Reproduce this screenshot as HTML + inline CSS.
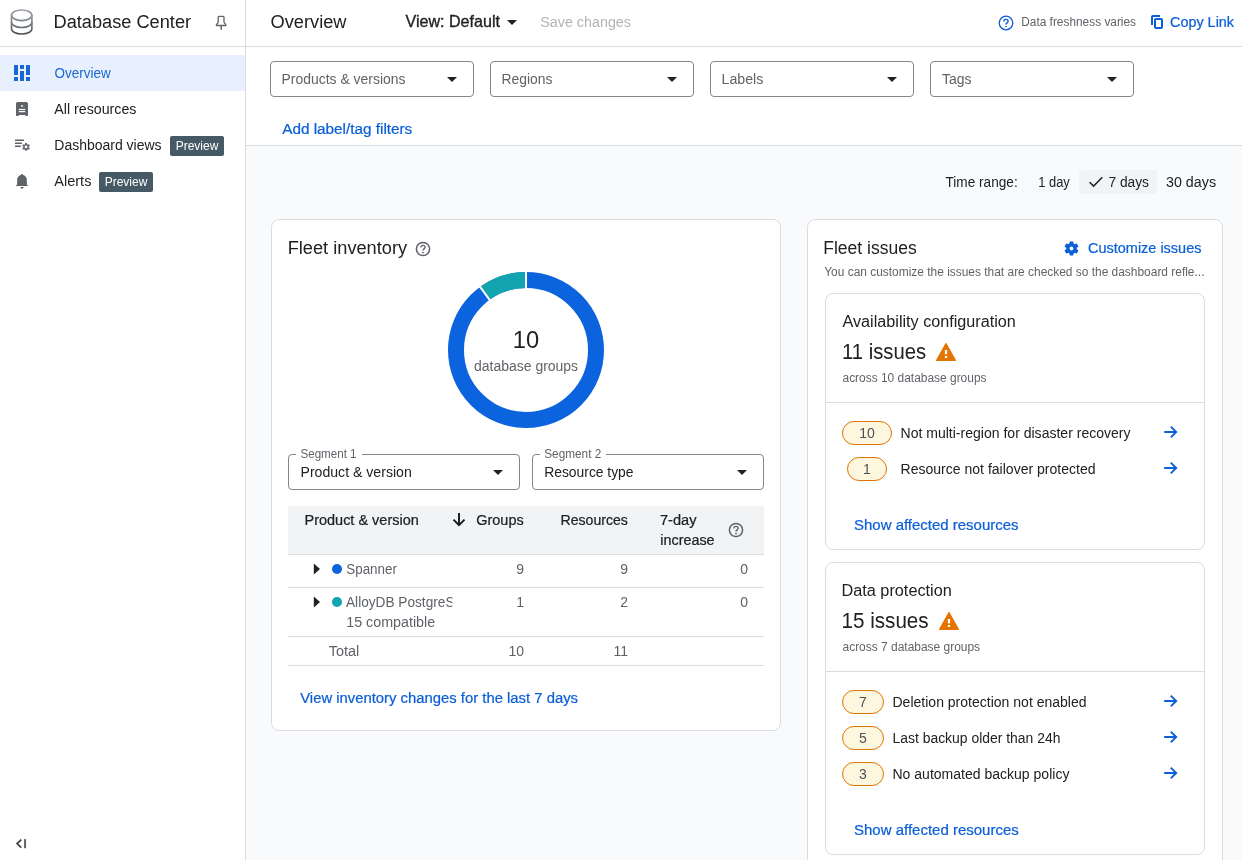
<!DOCTYPE html>
<html lang="en">
<head>
<meta charset="utf-8">
<title>Database Center</title>
<style>
*{box-sizing:border-box;margin:0;padding:0}
html,body{width:1242px;height:860px;overflow:hidden;background:#f8fafc;font-family:"Liberation Sans",sans-serif;color:#202124;-webkit-font-smoothing:antialiased}
.abs{position:absolute}
.t{position:absolute;white-space:nowrap;line-height:1}
#side{position:absolute;left:0;top:0;width:246px;height:860px;background:#fff;border-right:1px solid #dadce0}
#top{position:absolute;left:246px;top:0;width:996px;height:47px;background:#fff;border-bottom:1px solid #dadce0}
#sidehead{position:absolute;left:0;top:0;width:245px;height:47px;border-bottom:1px solid #dadce0}
#filters{position:absolute;left:246px;top:47px;width:996px;height:99px;background:#fff;border-bottom:1px solid #dadce0}
.nav-active{position:absolute;left:0;top:55px;width:245px;height:36px;background:#e8f0fe}
.dd{position:absolute;top:61px;width:204px;height:36px;border:1px solid #80868b;border-radius:4px;background:#fff}
.dd .t{left:11px;top:10px;font-size:14px;color:#5f6368}
.caret{position:absolute;width:0;height:0;border-left:5px solid transparent;border-right:5px solid transparent;border-top:5px solid #202124}
.badge{position:absolute;width:54px;text-align:center;height:20px;background:#455a64;border-radius:2px;color:#fff;font-size:12px;line-height:20px;padding:0;white-space:nowrap}
.card{position:absolute;background:#fff;border:1px solid #dadce0;border-radius:8px}
.blue{color:#0b5fd9}
.gray{color:#5f6368}
.pill{position:absolute;height:24px;border:1.5px solid #e37400;background:#fef7e0;border-radius:12px;font-size:14px;line-height:23px;text-align:center;color:#4d5156}

.hl{left:288px;width:476px;height:1px;background:#dadce0}
.th{font-size:14px;color:#202124;-webkit-text-stroke:0.22px #202124}
.td{font-size:14px}
.r{text-align:right}
.lk{font-size:14px;-webkit-text-stroke:0.22px #0b5fd9}
.it{font-size:14px;color:#202124}
.t{transform-origin:0 0}
/*AUTO*/
#t_dbc{transform:translate(-0.5px,0px) scaleX(1.0111)}
#t_nav1{transform:translate(0.6px,0px) scaleX(0.961)}
#t_nav2{transform:translate(0.3px,0px) scaleX(1.0148)}
#t_nav3{transform:translate(0.3px,0px) scaleX(0.9991)}
#t_nav4{transform:translate(0.3px,0px) scaleX(1.0361)}
#t_title{transform:translate(0.5px,0px) scaleX(1.0132)}
#t_view{transform:translate(1.5px,0px) scaleX(1.0052)}
#t_save{transform:translate(0.25px,0px) scaleX(1.0227)}
#t_fresh{transform:translate(0.2px,0px) scaleX(0.9897)}
#t_copy{transform:translate(0px,0px) scaleX(1.0286)}
#t_dd1{transform:translate(-0.5px,0px) scaleX(0.996)}
#t_dd2{transform:translate(-0.5px,0px) scaleX(0.99)}
#t_dd3{transform:translate(-0.5px,0px) scaleX(1.0125)}
#t_dd4{transform:translate(0px,0px) scaleX(1)}
#t_addf{transform:translate(0.2px,0px) scaleX(1.0924)}
#t_tr{transform:translate(0.5px,0px) scaleX(0.973)}
#t_1d{transform:translate(0.25px,0px) scaleX(0.9214)}
#t_7d{transform:translate(0.5px,0px) scaleX(0.9817)}
#t_30d{transform:translate(0px,0px) scaleX(1.0204)}
#t_fi{transform:translate(-0.3px,0px) scaleX(1.0111)}
#t_ten{transform:translate(-0.2px,0px) scaleX(1.0292)}
#t_dbg{transform:translate(0px,0px) scaleX(0.9981)}
#t_s1{transform:translate(0.5px,0px) scaleX(0.965)}
#t_s1v{transform:translate(0.5px,0px) scaleX(1.0068)}
#t_s2{transform:translate(0.25px,0px) scaleX(0.9828)}
#t_s2v{transform:translate(0.25px,0px) scaleX(0.9889)}
#t_h1{transform:translate(0.5px,0px) scaleX(1.0341)}
#t_h2{transform:translate(0.25px,0px) scaleX(1.0326)}
#t_h3{transform:translate(0.5px,0px) scaleX(1.0075)}
#t_h4{transform:translate(0px,0px) scaleX(1.0417)}
#t_h5{transform:translate(0.3px,0px) scaleX(1.0264)}
#t_r1{transform:translate(0.25px,0px) scaleX(0.9575)}
#t_r2x{transform:translate(0.25px,0px) scaleX(1.0201)}
#t_r3{transform:translate(0.75px,0px) scaleX(1.0345)}
#t_vic{transform:translate(0.2px,0px) scaleX(1.0603)}
#t_fis{transform:translate(-0.75px,0px) scaleX(0.9737)}
#t_cust{transform:translate(0px,0px) scaleX(1.0341)}
#t_you{transform:translate(0.25px,0px) scaleX(0.9941)}
#t_av{transform:translate(0.5px,0px) scaleX(1.0117)}
#t_11i{transform:translate(0px,0px) scaleX(0.9)}
#t_ac10{transform:translate(0.5px,0px) scaleX(0.9948)}
#t_i1{transform:translate(0.5px,0px) scaleX(1.0022)}
#t_i2{transform:translate(0.5px,0px) scaleX(1.0026)}
#t_sar1{transform:translate(0px,0px) scaleX(1.0698)}
#t_dp{transform:translate(-0.5px,0px) scaleX(1.0164)}
#t_15i{transform:translate(-0.5px,0px) scaleX(0.917)}
#t_ac7{transform:translate(0.5px,0px) scaleX(0.9964)}
#t_i3{transform:translate(0.5px,0px) scaleX(1.0013)}
#t_i4{transform:translate(0.5px,0px) scaleX(0.9941)}
#t_i5{transform:translate(0.5px,0px) scaleX(1.0014)}
#t_sar2{transform:translate(0px,0px) scaleX(1.0708)}
/*ENDAUTO*/
</style>
</head>
<body><div id="app" style="position:absolute;left:0;top:0;width:1242px;height:860px;will-change:transform">
<!-- SIDEBAR -->
<div id="side">
  <div id="sidehead"></div>
  <div class="nav-active"></div>
</div>
<div id="top"></div>
<div id="filters"></div>

<!-- sidebar header -->
<svg class="abs" style="left:9px;top:8px" width="26" height="28" viewBox="0 0 26 28" fill="none" stroke="url(#dbg)" stroke-width="1.600">
  <defs><linearGradient id="dbg" gradientUnits="userSpaceOnUse" x1="0" y1="0" x2="0" y2="28"><stop offset="0" stop-color="#9aa0a6"/><stop offset=".45" stop-color="#80868b"/><stop offset="1" stop-color="#45494d"/></linearGradient></defs>
  <ellipse cx="12.700" cy="7.300" rx="10.200" ry="5.300"/>
  <path d="M2.500 7.300v13.400c0 2.930 4.570 5.300 10.200 5.300s10.200-2.370 10.200-5.300V7.300"/>
  <path d="M2.500 14.200c0 2.930 4.570 5.300 10.200 5.300s10.200-2.370 10.200-5.300"/>
</svg>
<div class="t" id="t_dbc" style="left:54px;top:13px;font-size:18px;color:#202124">Database Center</div>
<svg class="abs" style="left:213px;top:14px" width="16" height="18" viewBox="0 0 16 18" fill="none" stroke="#5f6368" stroke-width="1.3">
  <path stroke-linejoin="round" d="M5.200 8.400V3.300c0-.6.400-1 1-1h3.800c.6 0 1 .4 1 1v5.100l1.800 2.300v.8H3.400v-.8z"/><path stroke-width="1.500" d="M8.200 11.500v4.200"/>
</svg>

<!-- nav -->
<svg class="abs" style="left:14px;top:65px" width="16" height="16" viewBox="0 0 16 16" fill="#1967d2">
  <rect x="0" y="0" width="4" height="10"/><rect x="0" y="12" width="4" height="4"/>
  <rect x="6" y="0" width="4" height="4"/><rect x="6" y="6" width="4" height="10"/>
  <rect x="12" y="0" width="4" height="10"/><rect x="12" y="12" width="4" height="4"/>
</svg>
<div class="t" id="t_nav1" style="left:54px;top:66px;font-size:14px;color:#1967d2">Overview</div>

<svg class="abs" style="left:16px;top:102px" width="12" height="14" viewBox="0 0 12 14">
  <path fill="#5f6368" d="M1.800 0h8.400c1 0 1.800.8 1.800 1.800v11.100c0 .6-.5 1.100-1.100 1.100h-.7c-.6 0-1.100-.5-1.100-1.100H2.900c0 .6-.5 1.100-1.100 1.100h-.7C.5 14 0 13.500 0 12.900V1.800C0 .8.800 0 1.800 0z"/>
  <rect x="5" y="3.100" width="2.100" height="1.800" fill="#d5d7d9"/>
  <rect x="2.800" y="6.900" width="6.400" height="1.200" fill="#fff"/>
  <rect x="2.800" y="9" width="6.400" height="1.200" fill="#fff"/>
</svg>
<div class="t" id="t_nav2" style="left:54px;top:102px;font-size:14px">All resources</div>

<svg class="abs" style="left:15px;top:139px" width="16" height="13" viewBox="0 0 16 13" fill="none" stroke="#5f6368">
  <path stroke="none" fill="#5f6368" d="M0 .4h9v1.500H0zM0 3.400h6.900v1.500H0zM0 6.450h5.900v1.500H0z"/>
  <circle cx="11.05" cy="7.95" r="2.150" stroke-width="1.500"/>
  <path stroke-width="1.900" d="M11.05 5.45L11.05 4.05M13.22 6.70L14.43 6.00M13.22 9.20L14.43 9.90M11.05 10.45L11.05 11.85M8.88 9.20L7.67 9.90M8.88 6.70L7.67 6.00"/>
</svg>
<div class="t" id="t_nav3" style="left:54px;top:138px;font-size:14px">Dashboard views</div>
<div class="badge" id="b1" style="left:170px;top:136px">Preview</div>

<svg class="abs" style="left:16px;top:174px" width="12" height="15" viewBox="0 0 12 15" fill="#5f6368">
  <path d="M5 .9C5 .4 5.450 0 6 0s1 .4 1 .9v.150c2.200.5 3.850 2.400 3.850 4.750v4.600l1.150 1.200v.3H0v-.3l1.150-1.200V5.800c0-2.350 1.650-4.250 3.850-4.750z"/>
  <path d="M4.400 13h3.200c0 .950-.7 1.700-1.600 1.700s-1.600-.750-1.600-1.700z"/>
</svg>
<div class="t" id="t_nav4" style="left:54px;top:174px;font-size:14px">Alerts</div>
<div class="badge" id="b2" style="left:99px;top:172px">Preview</div>

<svg class="abs" style="left:15px;top:838px" width="13" height="12" viewBox="0 0 13 12" fill="none" stroke="#3c4043">
  <path stroke-width="1.700" d="M6.300 1.600L2.100 5.600l4.200 4"/><path stroke-width="2" stroke="#5f6368" d="M10.050 1.100v9.100"/>
</svg>

<!-- top bar -->
<div class="t" id="t_title" style="left:270px;top:13px;font-size:18px">Overview</div>
<div class="t" id="t_view" style="left:404px;top:14px;font-size:16px;color:#202124;-webkit-text-stroke:0.32px #202124">View: Default</div>
<div class="caret" style="left:507px;top:20px"></div>
<div class="t" id="t_save" style="left:540px;top:15px;font-size:14px;color:#b0b3b8">Save changes</div>
<svg class="abs" style="left:998px;top:15px" width="16" height="16" viewBox="0 0 16 16" fill="none" stroke="#0b5fd9" stroke-width="1.300">
  <circle cx="8" cy="8" r="6.800"/>
  <path d="M5.900 6.400c0-1.200.9-2 2.100-2s2.100.8 2.100 1.900c0 1.500-2.100 1.700-2.100 3.300" stroke-width="1.400"/>
  <circle cx="8" cy="11.500" r=".5" fill="#0b5fd9" stroke-width=".8"/>
</svg>
<div class="t gray" id="t_fresh" style="left:1021px;top:16px;font-size:12px">Data freshness varies</div>
<svg class="abs" style="left:1150px;top:14px" width="14" height="16" viewBox="0 0 14 16" fill="none" stroke="#0b5fd9" stroke-width="2">
  <path d="M2 10.900V3c0-.55.450-1 1-1h7"/>
  <rect x="5" y="5" width="7" height="9" rx="1"/>
</svg>
<div class="t blue" id="t_copy" style="left:1170px;top:15px;font-size:14px;-webkit-text-stroke:0.22px #0b5fd9">Copy Link</div>

<!-- filters -->
<div class="dd" style="left:270px"><div class="t" id="t_dd1">Products &amp; versions</div><div class="caret" style="left:176px;top:15px"></div></div>
<div class="dd" style="left:490px"><div class="t" id="t_dd2">Regions</div><div class="caret" style="left:176px;top:15px"></div></div>
<div class="dd" style="left:710px"><div class="t" id="t_dd3">Labels</div><div class="caret" style="left:176px;top:15px"></div></div>
<div class="dd" style="left:930px"><div class="t" id="t_dd4">Tags</div><div class="caret" style="left:176px;top:15px"></div></div>
<div class="t blue" id="t_addf" style="left:282px;top:122px;font-size:14px;-webkit-text-stroke:0.22px #0b5fd9">Add label/tag filters</div>


<!-- time range -->
<div class="t" id="t_tr" style="left:945px;top:175px;font-size:14px">Time range:</div>
<div class="t" id="t_1d" style="left:1038px;top:175px;font-size:14px">1 day</div>
<div class="abs" style="left:1079px;top:170px;width:78px;height:24px;background:#f1f3f4;border-radius:4px"></div>
<svg class="abs" style="left:1088px;top:175px" width="16" height="14" viewBox="0 0 16 14" fill="none" stroke="#202124" stroke-width="1.500"><path d="M1.600 7.200l4 3.900L14.300 2.300"/></svg>
<div class="t" id="t_7d" style="left:1108px;top:175px;font-size:14px">7 days</div>
<div class="t" id="t_30d" style="left:1166px;top:175px;font-size:14px">30 days</div>

<!-- Fleet inventory card -->
<div class="card" style="left:271px;top:219px;width:510px;height:512px"></div>
<div class="t" id="t_fi" style="left:288px;top:239px;font-size:18px">Fleet inventory</div>
<svg class="abs" style="left:415px;top:240.8px" width="16" height="16" viewBox="0 0 16 16" fill="none" stroke="#5f6368" stroke-width="1.500">
  <circle cx="8" cy="8" r="6.600"/>
  <path d="M5.900 6.400c0-1.200.9-2 2.100-2s2.100.8 2.100 1.900c0 1.500-2.100 1.700-2.100 3.300" stroke-width="1.350"/>
  <circle cx="8" cy="11.600" r=".55" fill="#5f6368" stroke-width=".8"/>
</svg>
<svg class="abs" style="left:446px;top:270px" width="160" height="160" viewBox="-80 -80 160 160">
  <circle r="70" fill="none" stroke="#0b63de" stroke-width="16"/>
  <path d="M0 -70 A70 70 0 0 0 -41.145 -56.631" fill="none" stroke="#12a4af" stroke-width="16"/>
  <path d="M0 -61V-79M-35.855 -49.350L-46.435 -63.913" stroke="#fff" stroke-width="2"/>
</svg>
<div class="t" id="t_ten" style="left:513px;top:329px;font-size:23px">10</div>
<div class="t gray" id="t_dbg" style="left:474px;top:359px;font-size:14px">database groups</div>

<!-- segment selects -->
<div class="abs" style="left:288px;top:454px;width:232px;height:36px;border:1px solid #80868b;border-radius:4px"></div>
<div class="abs" style="left:296px;top:452px;width:66px;height:5px;background:#fff"></div>
<div class="t gray" id="t_s1" style="left:300px;top:448px;font-size:12px">Segment 1</div>
<div class="t" id="t_s1v" style="left:300px;top:465px;font-size:14px">Product &amp; version</div>
<div class="caret" style="left:493px;top:470px"></div>
<div class="abs" style="left:532px;top:454px;width:232px;height:36px;border:1px solid #80868b;border-radius:4px"></div>
<div class="abs" style="left:540px;top:452px;width:66px;height:5px;background:#fff"></div>
<div class="t gray" id="t_s2" style="left:544px;top:448px;font-size:12px">Segment 2</div>
<div class="t" id="t_s2v" style="left:544px;top:465px;font-size:14px">Resource type</div>
<div class="caret" style="left:737px;top:470px"></div>

<!-- table -->
<div class="abs" style="left:288px;top:506px;width:476px;height:48px;background:#f1f3f4"></div>
<div class="abs hl" style="top:554px"></div>
<div class="abs hl" style="top:587px"></div>
<div class="abs hl" style="top:636px"></div>
<div class="abs hl" style="top:665px"></div>
<div class="t th" id="t_h1" style="left:304px;top:513px">Product &amp; version</div>
<svg class="abs" style="left:452px;top:512px" width="14" height="15" viewBox="0 0 14 15" fill="none" stroke="#17191c" stroke-width="1.900"><path d="M7 1v12M1.500 7.700L7 13.200l5.500-5.500"/></svg>
<div class="t th" id="t_h2" style="left:476px;top:513px">Groups</div>
<div class="t th" id="t_h3" style="left:560px;top:513px">Resources</div>
<div class="t th" id="t_h4" style="left:660px;top:513px">7-day</div>
<div class="t th" id="t_h5" style="left:660px;top:533px">increase</div>
<svg class="abs" style="left:728px;top:522px" width="16" height="16" viewBox="0 0 16 16" fill="none" stroke="#5f6368" stroke-width="1.500">
  <circle cx="8" cy="8" r="6.600"/>
  <path d="M5.900 6.400c0-1.200.9-2 2.100-2s2.100.8 2.100 1.900c0 1.500-2.100 1.700-2.100 3.300" stroke-width="1.350"/>
  <circle cx="8" cy="11.600" r=".55" fill="#5f6368" stroke-width=".8"/>
</svg>

<svg class="abs" style="left:313px;top:563px" width="8" height="12" viewBox="0 0 8 12"><path d="M.8 .5l6.200 5.500-6.200 5.500z" fill="#202124"/></svg>
<div class="abs" style="left:332px;top:564px;width:10px;height:10px;border-radius:5px;background:#0b63de"></div>
<div class="t gray td" id="t_r1" style="left:346px;top:562px">Spanner</div>
<div class="t gray td r" id="t_r1a" style="left:424px;top:562px;width:100px">9</div>
<div class="t gray td r" id="t_r1b" style="left:528px;top:562px;width:100px">9</div>
<div class="t gray td r" id="t_r1c" style="left:648px;top:562px;width:100px">0</div>

<svg class="abs" style="left:313px;top:596px" width="8" height="12" viewBox="0 0 8 12"><path d="M.8 .5l6.200 5.500-6.200 5.500z" fill="#202124"/></svg>
<div class="abs" style="left:332px;top:597px;width:10px;height:10px;border-radius:5px;background:#12a4af"></div>
<div class="t gray td" id="t_r2" style="left:346px;top:592px;width:108.700px;overflow:hidden;line-height:20px;height:20px;transform:scaleX(0.975)">AlloyDB PostgreSQL</div>
<div class="t gray td" id="t_r2x" style="left:346px;top:615px">15 compatible</div>
<div class="t gray td r" id="t_r2a" style="left:424px;top:595px;width:100px">1</div>
<div class="t gray td r" id="t_r2b" style="left:528px;top:595px;width:100px">2</div>
<div class="t gray td r" id="t_r2c" style="left:648px;top:595px;width:100px">0</div>

<div class="t gray td" id="t_r3" style="left:328px;top:644px">Total</div>
<div class="t gray td r" id="t_r3a" style="left:424px;top:644px;width:100px">10</div>
<div class="t gray td r" id="t_r3b" style="left:528px;top:644px;width:100px">11</div>

<div class="t blue lk" id="t_vic" style="left:300px;top:691px">View inventory changes for the last 7 days</div>

<!-- Fleet issues card -->
<div class="card" style="left:807px;top:219px;width:416px;height:700px"></div>
<div class="t" id="t_fis" style="left:824px;top:239px;font-size:18px">Fleet issues</div>
<svg class="abs" style="left:1062.5px;top:239.5px" width="17" height="17" viewBox="0 0 24 24"><path fill="#0b5fd9" d="M19.430 12.980c.040-.320.070-.640.070-.980s-.030-.660-.070-.980l2.110-1.650c.190-.150.240-.420.120-.640l-2-3.460c-.120-.220-.390-.300-.610-.220l-2.490 1c-.520-.400-1.080-.730-1.690-.980l-.380-2.650C14.460 2.180 14.250 2 14 2h-4c-.250 0-.460.180-.490.420l-.380 2.650c-.610.250-1.170.590-1.690.980l-2.490-1c-.230-.090-.490 0-.610.220l-2 3.460c-.130.220-.070.490.120.640l2.110 1.650c-.040.320-.070.650-.070.980s.030.660.070.980l-2.110 1.650c-.190.150-.240.420-.120.640l2 3.460c.120.220.390.300.610.220l2.490-1c.520.400 1.080.730 1.690.980l.380 2.650c.030.240.240.420.490.420h4c.250 0 .460-.180.490-.420l.380-2.650c.610-.250 1.170-.590 1.690-.980l2.490 1c.230.090.490 0 .610-.220l2-3.460c.120-.220.070-.490-.120-.640l-2.110-1.650zM12 14.700c-1.490 0-2.700-1.210-2.700-2.700s1.210-2.700 2.700-2.700 2.700 1.210 2.700 2.700-1.210 2.700-2.700 2.700z"/></svg>
<div class="t blue lk" id="t_cust" style="left:1088px;top:241px">Customize issues</div>
<div class="t gray" id="t_you" style="left:824px;top:266px;font-size:12px">You can customize the issues that are checked so the dashboard refle...</div>

<!-- Availability card -->
<div class="card" style="left:825px;top:293px;width:380px;height:257px"></div>
<div class="abs" style="left:826px;top:402px;width:378px;height:1px;background:#dadce0"></div>
<div class="t" id="t_av" style="left:842px;top:314px;font-size:16px">Availability configuration</div>
<div class="t" id="t_11i" style="left:842px;top:340.5px;font-size:22.5px">11 issues</div>
<svg class="abs warn" style="left:935px;top:342px" width="22" height="20" viewBox="0 0 22 20"><path d="M11 1.500L20.400 18.400H1.600z" fill="#e37400" stroke="#e37400" stroke-width="1.200" stroke-linejoin="round"/><rect x="9.850" y="8" width="2.300" height="4.300" fill="#fff"/><rect x="9.850" y="14" width="2.300" height="2" fill="#fff"/></svg>
<div class="t gray" id="t_ac10" style="left:842px;top:372px;font-size:12px">across 10 database groups</div>
<div class="pill" style="left:842px;top:421px;width:50px">10</div>
<div class="t it" id="t_i1" style="left:900px;top:426px">Not multi-region for disaster recovery</div>
<svg class="abs arr" style="left:1164px;top:425px" width="14" height="14" viewBox="0 0 14 14" fill="none" stroke="#0b5fd9" stroke-width="1.900"><path d="M0.200 7h12M6.800 1.600L12.200 7l-5.400 5.400"/></svg>
<div class="pill" style="left:847px;top:457px;width:40px">1</div>
<div class="t it" id="t_i2" style="left:900px;top:462px">Resource not failover protected</div>
<svg class="abs arr" style="left:1164px;top:461px" width="14" height="14" viewBox="0 0 14 14" fill="none" stroke="#0b5fd9" stroke-width="1.900"><path d="M0.200 7h12M6.800 1.600L12.200 7l-5.400 5.400"/></svg>
<div class="t blue lk" id="t_sar1" style="left:854px;top:518px">Show affected resources</div>

<!-- Data protection card -->
<div class="card" style="left:825px;top:562px;width:380px;height:293px"></div>
<div class="abs" style="left:826px;top:671px;width:378px;height:1px;background:#dadce0"></div>
<div class="t" id="t_dp" style="left:842px;top:583px;font-size:16px">Data protection</div>
<div class="t" id="t_15i" style="left:842px;top:609.5px;font-size:22.5px">15 issues</div>
<svg class="abs warn" style="left:938px;top:611px" width="22" height="20" viewBox="0 0 22 20"><path d="M11 1.500L20.400 18.400H1.600z" fill="#e37400" stroke="#e37400" stroke-width="1.200" stroke-linejoin="round"/><rect x="9.850" y="8" width="2.300" height="4.300" fill="#fff"/><rect x="9.850" y="14" width="2.300" height="2" fill="#fff"/></svg>
<div class="t gray" id="t_ac7" style="left:842px;top:641px;font-size:12px">across 7 database groups</div>
<div class="pill" style="left:842px;top:690px;width:42px">7</div>
<div class="t it" id="t_i3" style="left:892px;top:695px">Deletion protection not enabled</div>
<svg class="abs arr" style="left:1164px;top:694px" width="14" height="14" viewBox="0 0 14 14" fill="none" stroke="#0b5fd9" stroke-width="1.900"><path d="M0.200 7h12M6.800 1.600L12.200 7l-5.400 5.400"/></svg>
<div class="pill" style="left:842px;top:726px;width:42px">5</div>
<div class="t it" id="t_i4" style="left:892px;top:731px">Last backup older than 24h</div>
<svg class="abs arr" style="left:1164px;top:730px" width="14" height="14" viewBox="0 0 14 14" fill="none" stroke="#0b5fd9" stroke-width="1.900"><path d="M0.200 7h12M6.800 1.600L12.200 7l-5.400 5.400"/></svg>
<div class="pill" style="left:842px;top:762px;width:42px">3</div>
<div class="t it" id="t_i5" style="left:892px;top:767px">No automated backup policy</div>
<svg class="abs arr" style="left:1164px;top:766px" width="14" height="14" viewBox="0 0 14 14" fill="none" stroke="#0b5fd9" stroke-width="1.900"><path d="M0.200 7h12M6.800 1.600L12.200 7l-5.400 5.400"/></svg>
<div class="t blue lk" id="t_sar2" style="left:854px;top:823px">Show affected resources</div>

</div></body>
</html>
